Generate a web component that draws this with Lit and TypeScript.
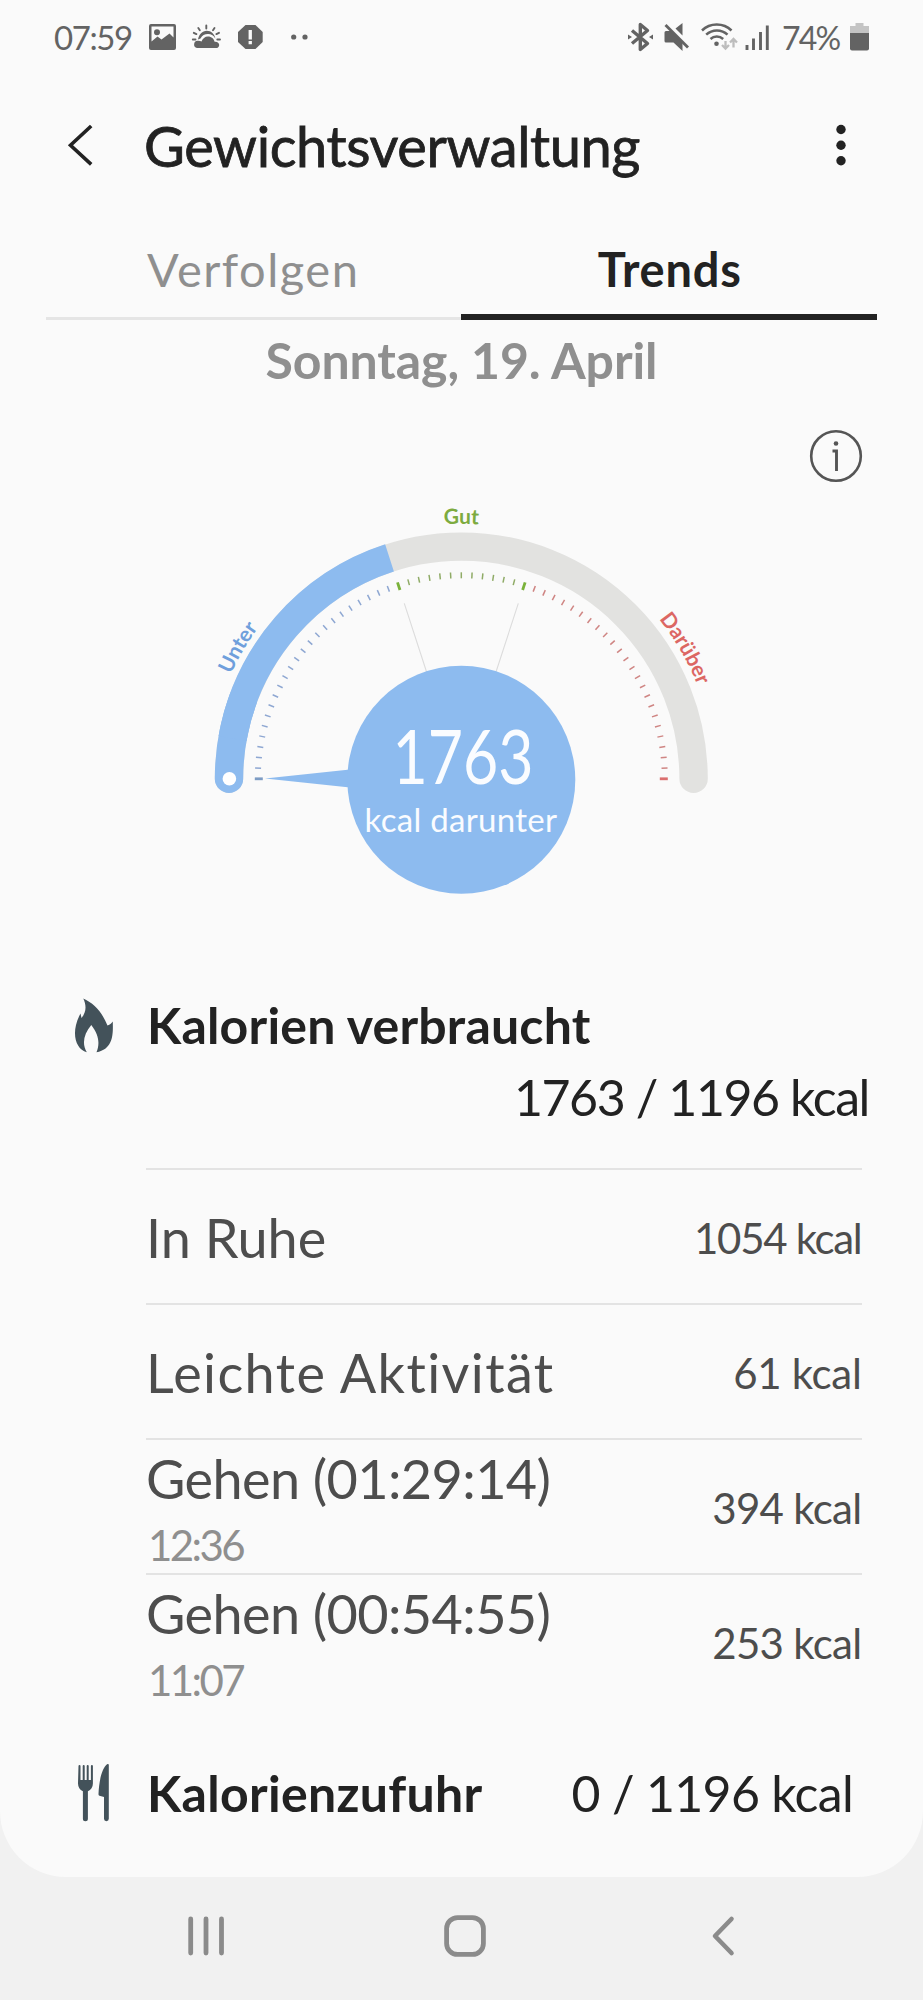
import { LitElement, html, svg, css } from "lit";
import { customElement } from "lit/decorators.js";

interface Entry { name: string; time?: string; value: string; fit: string; vfit: string; }

const ENTRIES: Entry[] = [
  { name: "In Ruhe", value: "1054 kcal", fit: "f-rest", vfit: "v-4" },
  { name: "Leichte Aktivität", value: "61 kcal", fit: "f-light", vfit: "v-2" },
  { name: "Gehen (01:29:14)", time: "12:36", value: "394 kcal", fit: "f-walk", vfit: "v-3" },
  { name: "Gehen (00:54:55)", time: "11:07", value: "253 kcal", fit: "f-walk", vfit: "v-3" },
];

const CX = 461.3;
const CY = 778.8;

const polar = (r: number, deg: number): [number, number] => {
  const a = (deg * Math.PI) / 180;
  return [CX - r * Math.cos(a), CY - r * Math.sin(a)];
};

const arc = (r: number, from: number, to: number) => {
  const [x1, y1] = polar(r, from);
  const [x2, y2] = polar(r, to);
  return `M${x1.toFixed(2)} ${y1.toFixed(2)}A${r} ${r} 0 0 1 ${x2.toFixed(2)} ${y2.toFixed(2)}`;
};

@customElement("calorie-gauge")
class CalorieGauge extends LitElement {
  static styles = css`
    :host { display: block; }
    svg { display: block; width: 100%; height: 430px; }
    text { font-family: Lato, "Open Sans", sans-serif; text-anchor: middle; }
    .label { font-size: 21px; font-weight: 700; }
    .under { fill: #6f9fdc; }
    .good { fill: #7dab3f; }
    .over { fill: #dc6763; }
    .amount { font-size: 75px; fill: #fafcff; }
    .unit { font-size: 33px; fill: #fafcff; letter-spacing: 0.3px; }
  `;

  private tick(i: number) {
    const deg = i * 3;
    const major = i === 0 || i === 24 || i === 36 || i === 60;
    const [x1, y1] = polar(major ? 198.5 : 200.5, deg);
    const [x2, y2] = polar(206.5, deg);
    const color = i < 24
      ? major ? "#7d9cc4" : "#8ea7d2"
      : i <= 36 ? (major ? "#7ab23a" : "#8fab66") : (major ? "#db6f6f" : "#cf8583");
    return svg`<line x1=${x1} y1=${y1} x2=${x2} y2=${y2} stroke=${color} stroke-width=${major ? 2.8 : 1.5} />`;
  }

  render() {
    const [gx1, gy1] = polar(184.5, 72);
    const [hx1, hy1] = polar(184.5, 108);
    const [gx2, gy2] = polar(112, 72);
    const [hx2, hy2] = polar(112, 108);
    return html`
      <svg viewBox="0 481 923 430">
        <defs>
          <path id="under" d=${arc(253, 0, 61)} />
          <path id="good" d=${arc(255, 60, 120)} />
          <path id="over" d=${arc(254, 119.500, 180)} />
        </defs>
        <path d=${arc(232.3, 0, 180)} fill="none" stroke="#e2e2e0" stroke-width="28.4" stroke-linecap="round" />
        <path d=${arc(232.3, 0, 20)} fill="none" stroke="#8dbbef" stroke-width="28.4" stroke-linecap="round" />
        <path d=${arc(232.3, 10, 72)} fill="none" stroke="#8dbbef" stroke-width="28.4" />
        <circle cx="229.4" cy="778.8" r="6.8" fill="#fff" />
        ${Array.from({ length: 61 }, (_, i) => this.tick(i))}
        <path d="M${gx1} ${gy1}L${gx2} ${gy2}M${hx1} ${hy1}L${hx2} ${hy2}" stroke="#dcdcdc" stroke-width="1.1" fill="none" />
        <path d="M265 778.6L350 769.4V787.6Z" fill="#8dbbef" />
        <circle cx=${CX} cy="779.8" r="114" fill="#8dbbef" />
        <text class="label under"><textPath href="#under" startOffset="50%">Unter</textPath></text>
        <text class="label good"><textPath href="#good" startOffset="50%">Gut</textPath></text>
        <text class="label over"><textPath href="#over" startOffset="50%">Darüber</textPath></text>
        <text class="amount" x="463" y="783.5" textLength="141" lengthAdjust="spacingAndGlyphs">1763</text>
        <text class="unit" x="461" y="832">kcal darunter</text>
      </svg>`;
  }
}

@customElement("app-root")
class AppRoot extends LitElement {
  static styles = css`
    :host {
      display: flex; flex-direction: column; width: 923px; height: 2000px;
      background: #f1f1f1; color: #222; overflow: hidden;
      font-family: Lato, "Open Sans", sans-serif; white-space: nowrap;
    }
    svg { display: block; flex: none; }
    .screen { height: 1876.5px; flex: none; background: #fafafa; border-radius: 0 0 66px 66px; }
    .status { display: flex; align-items: center; height: 74px; padding: 0 54px; box-sizing: border-box; color: #636363; font-size: 33px; }
    .clock { width: 95px; letter-spacing: -1.4px; }
    .battery { font-size: 32px; letter-spacing: -1.8px; margin-left: 12px; width: 68px; }
    .grow { flex: 1; }
    .header { display: flex; align-items: center; height: 142px; padding: 0 77px 0 66px; }
    .title { flex: 1; margin-left: 48px; font-size: 56px; letter-spacing: -0.4px; -webkit-text-stroke: 0.8px #222; }
    .tabs { display: flex; height: 104px; padding: 0 46px; }
    .tab { flex: 1; box-sizing: border-box; height: 104px; padding-top: 8px; line-height: 90px; text-align: center; font-size: 47px; letter-spacing: 1.5px; color: #8f8f8f; background: linear-gradient(#e5e5e5, #e5e5e5) bottom / 100% 3.5px no-repeat; }
    .tab.active { padding-left: 2px; color: #222; font-weight: 700; letter-spacing: 0.8px; background: linear-gradient(#222, #222) bottom / 100% 6px no-repeat; }
    .date { line-height: 80px; text-align: center; font-size: 50px; font-weight: 700; letter-spacing: -0.1px; color: #8f8f8f; }
    .info { display: flex; justify-content: flex-end; padding: 29px 60px 0 0; height: 52px; }
    .section { display: flex; align-items: center; height: 80px; padding-left: 70px; font-size: 50px; }
    .burned { margin-top: 74px; }
    .heading { font-weight: 700; margin-left: 27px; letter-spacing: 0.2px; }
    .intake { margin-top: 44.5px; padding-right: 70px; }
    .intake .heading { flex: 1; letter-spacing: 0.3px; }
    .intake .total { letter-spacing: -0.7px; }
    .sum { line-height: 65px; text-align: right; padding-right: 54px; font-size: 50px; letter-spacing: -1.4px; }
    .list { margin: 38px 61.5px 0 146px; }
    .row { display: flex; align-items: center; justify-content: space-between; height: 131.1px; padding-top: 2px; border-top: 2px solid #e3e3e3; color: #4d4d4d; }
    .name { font-size: 54px; line-height: 76px; }
    .time { font-size: 42px; line-height: 57px; color: #8f8f8f; letter-spacing: -2.6px; padding-left: 2px; }
    .value { font-size: 42px; }
    .f-rest { letter-spacing: 0; }
    .f-light { letter-spacing: 1.4px; }
    .f-walk { letter-spacing: -0.6px; }
    .v-4 { letter-spacing: -1.3px; }
    .v-3 { letter-spacing: -0.7px; }
    .v-2 { letter-spacing: -0.3px; }
    .nav { display: flex; align-items: center; flex: 1; padding: 0 188px 4px 187px; justify-content: space-between; }
    .home { margin-right: 6px; }
  `;

  render() {
    return html`
      <div class="screen">
        <div class="status">
          <span class="clock">07:59</span>
          <svg width="160" height="30" viewBox="149 22 160 30" fill="#636363">
            <path fill-rule="evenodd" d="M151 24h23a2 2 0 0 1 2 2v22a2 2 0 0 1-2 2h-23a2 2 0 0 1-2-2V26a2 2 0 0 1 2-2Zm.5 2.5v15l6-5 4 3 8-6 4 4v-11ZM157 29.300a3 3 0 1 1 0 6 3 3 0 0 1 0-6Z" />
            <path d="M197 48a3.700 3.700 0 0 1 .5-7.300c1.500-.2 3 .2 4 .8 1-3 3.500-5 6.500-5 3.500 0 6 2.300 6.600 5.200 2.600-.3 4.600 1 4.600 3.200 0 2-1.500 3.100-3.200 3.100Z" />
            <path d="M198 39.500c.8-5.300 4.500-8.800 8.700-8.800 4.500 0 8 3.300 8.700 8-1.300-2.800-4-4.600-7.400-4.600-3.300 0-6 1.500-7.500 4.400Z" />
            <path d="M206.300 25.500v3M198.300 28l1.500 2.200M214.500 28l-1.500 2.200M193.800 32.800l2.600 1.300M219 32.800l-2.600 1.300M192.800 39.500h2.700M217.300 39.500h2.700" stroke="#636363" stroke-width="1.900" stroke-linecap="round" />
            <path d="M245.500 25h10l7.200 7v10l-7.200 7h-10l-7.500-7V32Z" />
            <path d="M248.600 30h3.300v9.500h-3.300ZM248.600 41h3.300v3.200h-3.300Z" fill="#fafafa" />
            <circle cx="293.700" cy="37" r="2.600" /><circle cx="305" cy="37" r="2.600" />
          </svg>
          <span class="grow"></span>
          <svg width="144" height="32" viewBox="625 21 144 32" fill="none" stroke="#636363">
            <path d="M631 30.500l15.500 13-7.200 6V24.500l7.200 6-15.500 13" stroke-width="3.400" stroke-linejoin="round" />
            <path d="M627 34.500l4 2.500-4 2.500ZM652 34.500l-4 2.500 4 2.500Z" fill="#636363" stroke="none" />
            <path d="M663.500 32.500q0-1.500 1.500-1.500h5l11.500 11.500V51l-9-8.500H665q-1.500 0-1.500-1.500ZM674.500 28.500l7-5.500v12.500Z" fill="#636363" stroke="none" />
            <path d="M664.500 25l22.500 22.500" stroke-width="2.800" />
            <path d="M701 30.500c8-8 21.500-8 29.500 0M705.200 34.700c6-5.600 15.500-5.600 21.300 0M709.500 39c3.500-3.200 9-3.200 12.700 0" stroke-width="2.500" />
            <circle cx="715.500" cy="43.700" r="2.300" fill="#636363" stroke="none" />
            <path d="M724.500 41v7M721 45l3.500 3.500 3.500-3.500M732.500 47.500v-8M729 42.500l3.500-3.500 3.500 3.500" stroke="#bdbdbd" stroke-width="2.300" />
            <path d="M746 45v5M752.500 38.500v11.500M759.500 32v18M766.300 25.500v24.500" stroke-width="2.900" />
          </svg>
          <span class="battery">74%</span>
          <svg width="19" height="28" viewBox="0 0 19 28">
            <path d="M5.500 0h8v3H19v8H0V3h5.500Z" fill="#c4c4c4" />
            <path d="M0 10h19v15.500a2 2 0 0 1-2 2H2a2 2 0 0 1-2-2Z" fill="#636363" />
          </svg>
        </div>

        <div class="header">
          <svg width="30" height="42" viewBox="66 124 30 42"><path d="M91.200 126L70.500 145.200L91.200 164.400" fill="none" stroke="#222" stroke-width="3.600" /></svg>
          <span class="title">Gewichtsverwaltung</span>
          <svg width="10" height="42" viewBox="0 0 10 42" fill="#222"><circle cx="5" cy="5.500" r="4.700" /><circle cx="5" cy="21.200" r="4.700" /><circle cx="5" cy="36.700" r="4.700" /></svg>
        </div>

        <div class="tabs">
          <div class="tab">Verfolgen</div>
          <div class="tab active">Trends</div>
        </div>
        <div class="date">Sonntag, 19. April</div>
        <div class="info">
          <svg width="54" height="54" viewBox="0 0 54 54" fill="none" stroke="#555">
            <circle cx="27" cy="27" r="24.800" stroke-width="2.600" />
            <path d="M23.500 22h4v20" stroke-width="2.900" />
            <circle cx="27" cy="14.500" r="2.300" fill="#555" stroke="none" />
          </svg>
        </div>
        <calorie-gauge></calorie-gauge>

        <div class="section burned">
          <svg width="50" height="60" viewBox="70 994 50 60">
            <path d="M83.300 997.500C93 1002 101 1009 107.500 1024.500C110 1023.500 112 1022 112.800 1020.500C113 1032 114 1048 96.500 1051.300C100 1043 99 1034 91.300 1024C84 1033 81.500 1042 86.800 1051.300C75 1048 70.500 1031 80.500 1012.500L81.500 1017C86.500 1011 86.500 1004.500 83.300 997.500Z" fill="#43525a" />
          </svg>
          <span class="heading">Kalorien verbraucht</span>
        </div>
        <div class="sum">1763 / 1196 kcal</div>

        <div class="list">
          ${ENTRIES.map((e) => html`
            <div class="row">
              <div>
                <div class="name ${e.fit}">${e.name}</div>
                ${e.time ? html`<div class="time">${e.time}</div>` : ""}
              </div>
              <div class="value ${e.vfit}">${e.value}</div>
            </div>`)}
        </div>

        <div class="section intake">
          <svg width="50" height="60" viewBox="70 1763 50 60" fill="#43525a">
            <path d="M78.500 1766q0-1 1-1t1 1v14h2.200v-14q0-1 1-1t1 1v14h2v-14q0-1 1-1t1 1v14h2.200v-14q0-1 1-1t1 1v17.500c0 3.500-2 6.500-5 7.800v27.500a2.500 2.500 0 0 1-5 0v-27.500c-3-1.300-4.900-4.300-4.900-7.800Z" />
            <path d="M108.800 1765v53.800a2.400 2.400 0 0 1-4.800 0V1797l-4.500-1.200c-.8-.2-1-1-1-1.800C99 1782 101.500 1768 107.500 1764q1.300-.4 1.300 1Z" />
          </svg>
          <span class="heading">Kalorienzufuhr</span>
          <span class="total">0 / 1196 kcal</span>
        </div>
      </div>

      <div class="nav">
        <svg width="38" height="42" viewBox="0 0 38 42"><path d="M3.700 4v34M19 4v34M34.500 4v34" stroke="#8b8b8b" stroke-width="4.800" stroke-linecap="round" /></svg>
        <svg class="home" width="42" height="42" viewBox="0 0 42 42"><rect x="2.600" y="2.600" width="36.800" height="36.800" rx="11" fill="none" stroke="#8b8b8b" stroke-width="4.800" /></svg>
        <svg width="24" height="42" viewBox="0 0 24 42"><path d="M20.500 4L4 21L20.500 38" fill="none" stroke="#8b8b8b" stroke-width="4.600" stroke-linecap="round" stroke-linejoin="round" /></svg>
      </div>`;
  }
}
